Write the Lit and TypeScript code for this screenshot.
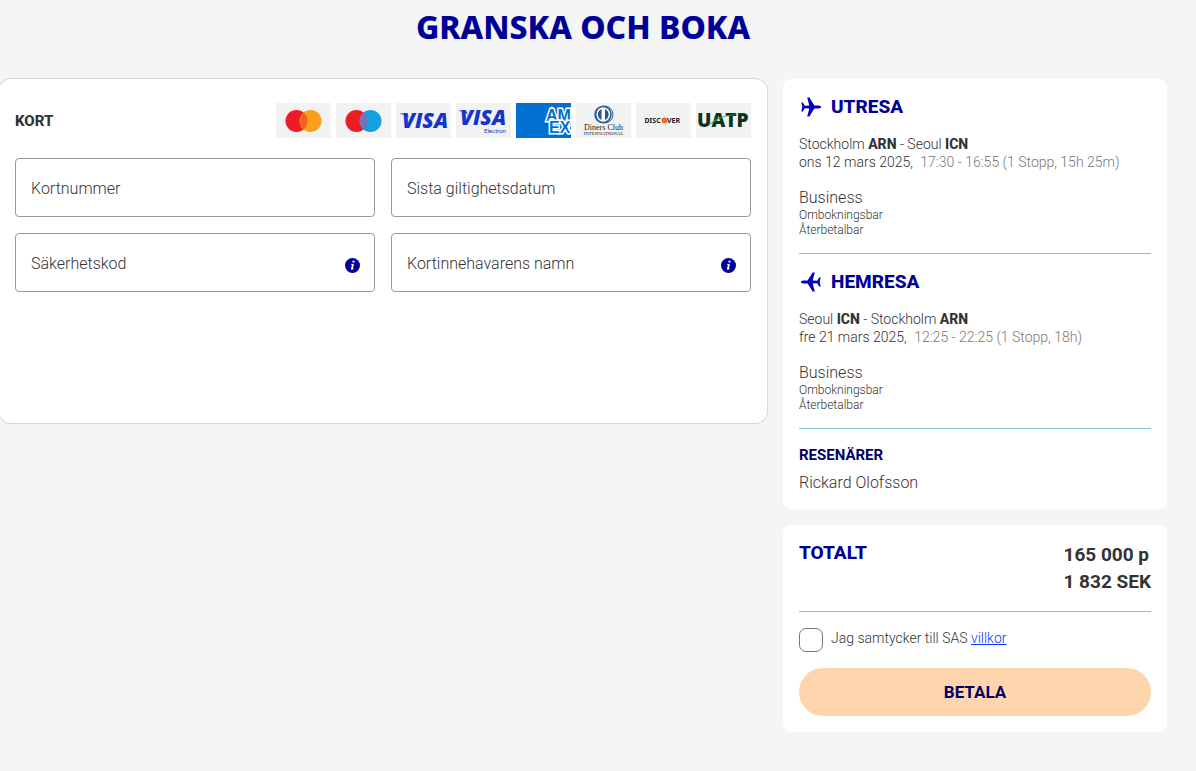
import { LitElement, html, css, svg, nothing } from 'lit';
import { customElement, property } from 'lit/decorators.js';

interface Trip {
  heading: string;
  inbound: boolean;
  from: string;
  fromCode: string;
  to: string;
  toCode: string;
  date: string;
  times: string;
}

const trips: Trip[] = [
  {
    heading: 'UTRESA', inbound: false,
    from: 'Stockholm', fromCode: 'ARN', to: 'Seoul', toCode: 'ICN',
    date: 'ons 12 mars 2025,', times: '17:30 - 16:55 (1 Stopp, 15h 25m)',
  },
  {
    heading: 'HEMRESA', inbound: true,
    from: 'Seoul', fromCode: 'ICN', to: 'Stockholm', toCode: 'ARN',
    date: 'fre 21 mars 2025,', times: '12:25 - 22:25 (1 Stopp, 18h)',
  },
];

const logos = [
  {
    name: 'Mastercard',
    art: svg`
      <circle cx="20.5" cy="18" r="11" fill="#ed1c24"/>
      <circle cx="34.5" cy="18" r="11" fill="#f99f1c"/>
      <path d="M27.5 9.5a11 11 0 0 1 0 17a11 11 0 0 1 0-17z" fill="#f26122"/>`,
  },
  {
    name: 'Maestro',
    art: svg`
      <circle cx="20.5" cy="18" r="11" fill="#ed1c24"/>
      <circle cx="34.5" cy="18" r="11" fill="#14a0dc"/>
      <path d="M27.5 9.5a11 11 0 0 1 0 17a11 11 0 0 1 0-17z" fill="#7673b5"/>`,
  },
  {
    name: 'Visa',
    art: svg`
      <path d="M4 10.500h7l2 4q-3-3-9-3.500z" fill="#1434cb"/>
      <text class="visa" x="6" y="25">VISA</text>`,
  },
  {
    name: 'Visa Electron',
    art: svg`
      <path d="M3 7.500h7l2 4q-3-3-9-3.500z" fill="#1434cb"/>
      <text class="visa" x="4" y="22">VISA</text>
      <text class="electron" x="28" y="30">Electron</text>`,
  },
  {
    name: 'American Express',
    art: svg`
      <rect width="55" height="35" fill="#016fd0"/>
      <text class="amex" x="30" y="18">AM</text>
      <text class="amex" x="33" y="30">EX</text>
      <circle cx="56" cy="25" r="3" fill="none" stroke="#fff" stroke-width="2"/>`,
  },
  {
    name: 'Diners Club International',
    art: svg`
      <circle cx="27" cy="11.500" r="8" fill="#fff" stroke="#24588f" stroke-width="1.500"/>
      <circle cx="28.500" cy="11.500" r="8.500" fill="none" stroke="#24588f"/>
      <path d="M25.500 6a6 6 0 0 0 0 11zM29 6a6 6 0 0 1 0 11z" fill="#24588f"/>
      <text class="diners" x="27.500" y="27">Diners Club</text>
      <text class="intl" x="27.500" y="32">INTERNATIONAL</text>`,
  },
  {
    name: 'Discover',
    art: svg`
      <text class="discover" x="8.500" y="20">DISC</text>
      <circle cx="28.500" cy="17.500" r="3" fill="#f26a21"/>
      <text class="discover" x="31" y="20">VER</text>`,
  },
  {
    name: 'UATP',
    art: svg`
      <text class="uatp" x="1" y="24">UATP</text>
      <path d="M12 23q9-12 38-12.500q-22 1-33 9z" fill="#37b34a"/>`,
  },
];

@customElement('card-field')
class CardField extends LitElement {
  @property() label = '';
  @property() autofill = 'off';
  @property({ type: Boolean }) info = false;

  static styles = css`
    :host { display: block; }
    .field {
      display: grid;
      grid-template-columns: 1fr auto;
      align-items: center;
      box-sizing: border-box;
      height: 59px;
      padding: 0 14px 0 15px;
      border: 1px solid #999;
      border-radius: 4px;
      background: #fff;
    }
    .field:focus-within { border-color: #000099; }
    label, input { grid-area: 1 / 1; }
    label { padding-top: 2px; color: #333; font-weight: 300; font-size: 16px; line-height: 20px; pointer-events: none; }
    input {
      width: 100%;
      height: 57px;
      padding: 0;
      border: 0;
      outline: 0;
      background: transparent;
      font: inherit;
      color: #333;
    }
    input:not(:placeholder-shown) + label { visibility: hidden; }
    .info { display: flex; margin-top: 5px; padding: 0; border: 0; background: none; cursor: pointer; }
  `;

  render() {
    return html`
      <div class="field">
        <input id="value" type="text" placeholder=" " autocomplete=${this.autofill} />
        <label for="value">${this.label}</label>
        ${this.info
          ? html`<button class="info" type="button" aria-label="Information">
              <svg width="15" height="15" viewBox="0 0 15 15" aria-hidden="true">
                <circle cx="7.500" cy="7.500" r="7.500" fill="#000099"/>
                <circle cx="8.500" cy="3.700" r="1.100" fill="#fff"/>
                <path d="M6 6.200L9 5.800L7.900 10.400Q7.900 10.900 9 10.200L8.800 11Q7.600 12 6.500 11.800Q5.700 11.400 6.100 10.200L6.900 6.900L5.900 6.800Z" fill="#fff"/>
              </svg>
            </button>`
          : nothing}
      </div>`;
  }
}

@customElement('trip-summary')
class TripSummary extends LitElement {
  @property({ attribute: false }) trip!: Trip;

  static styles = css`
    :host { display: block; padding-bottom: 15px; border-bottom: 1px solid #7fc3e3; }
    h2 {
      display: flex;
      align-items: center;
      gap: 8px;
      margin: 0 0 16px;
      color: #000099;
      font-size: 19px;
      line-height: 24px;
      font-weight: 800;
    }
    .inbound { transform: scaleX(-1); }
    p { margin: 0; }
    b { font-weight: 800; }
    .leg { font-size: 14px; line-height: 18px; }
    .times { margin-left: 4px; color: #777; }
    .fare { margin-top: 17px; font-size: 16px; line-height: 20px; }
    .rule { font-size: 12px; line-height: 15px; }
  `;

  render() {
    const t = this.trip;
    return html`
      <h2>
        <svg class=${t.inbound ? 'inbound' : ''} width="24" height="24" viewBox="0 0 24 24" aria-hidden="true">
          <path d="M2.300 7.600h1.500l2 3.100l4.500-.1L8.200 2.400h2.200l5 8.100h4.200q2.400.3 2.600 1.500q-.2 1.200-2.600 1.500h-4.200l-5 8.100H8.200l2.100-8.200l-4.500-.1l-2 3.100H2.300l1-4.400z" fill="#0000bf"/>
        </svg>
        ${t.heading}
      </h2>
      <p class="leg">${t.from} <b>${t.fromCode}</b> - ${t.to} <b>${t.toCode}</b></p>
      <p class="leg">${t.date} <span class="times">${t.times}</span></p>
      <p class="fare">Business</p>
      <p class="rule">Ombokningsbar</p>
      <p class="rule">Återbetalbar</p>`;
  }
}

@customElement('app-root')
class AppRoot extends LitElement {
  static styles = css`
    :host {
      display: block;
      box-sizing: border-box;
      min-height: 100vh;
      overflow-x: clip;
      padding: 0 29px 39px 0;
      background: #f5f5f5;
      color: #333;
      font-family: Roboto, "Liberation Sans", sans-serif;
      font-weight: 300;
    }
    main { margin-left: -1px; }
    h1 {
      margin: 0;
      padding: 7px 0 32px;
      color: #000099;
      font: 800 32px/40px "Noto Sans", "Open Sans", sans-serif;
      text-align: center;
    }
    h2, h3, p { margin: 0; }
    .columns { display: grid; grid-template-columns: 2fr 1fr; gap: 16px; align-items: start; }
    .payment {
      min-height: 304px;
      padding: 24px 16px 16px;
      border-radius: 12px;
      background: #fff;
      box-shadow: 0 0 0 1px #d8d8d8;
    }
    .payment-head { display: flex; align-items: center; justify-content: space-between; margin-bottom: 20px; }
    .payment-head h2 { font-size: 15px; line-height: 20px; font-weight: 800; }
    .logos { display: flex; gap: 5px; margin: 0; padding: 0; list-style: none; }
    .logos svg { display: block; background: #f2f2f2; }
    .fields { display: grid; grid-template-columns: 1fr 1fr; gap: 16px; }
    .visa { font: italic 800 21px "Open Sans", sans-serif; fill: #1434cb; }
    .electron { font: 400 6px Roboto, sans-serif; fill: #1434cb; }
    .amex { font: 700 16px "Liberation Sans", sans-serif; fill: #016fd0; stroke: #fff; stroke-width: 3px; paint-order: stroke; }
    .diners { font: 400 8px "Liberation Serif", serif; fill: #222; text-anchor: middle; }
    .intl { font: 400 5px "Liberation Serif", serif; fill: #222; text-anchor: middle; }
    .discover { font: 700 7px "Noto Sans", sans-serif; fill: #222; }
    .uatp { font: 800 19px "Open Sans", sans-serif; fill: #0b341f; }
    .side { display: grid; gap: 16px; }
    .card { padding: 16px; border-radius: 8px; background: #fff; }
    .trips { display: grid; gap: 16px; }
    .travellers h3 { margin-bottom: 8px; color: #000066; font-size: 15px; line-height: 20px; font-weight: 700; }
    .travellers p { font-size: 16px; line-height: 20px; }
    .total {
      display: flex;
      justify-content: space-between;
      padding-bottom: 16px;
      border-bottom: 1px solid #7fc3e3;
      font-size: 19px;
      font-weight: 700;
    }
    .total h2 { color: #000099; font-size: 19px; line-height: 24px; font-weight: 800; }
    .total p { line-height: 27px; }
    .consent { display: flex; gap: 8px; margin: 16px 0; font-size: 14px; line-height: 20px; }
    .consent input {
      appearance: none;
      flex: none;
      width: 24px;
      height: 24px;
      margin: 0;
      border: 1px solid #777;
      border-radius: 7px;
      background: #fff;
    }
    .consent input:checked { background: #000099; }
    .consent a { color: #0a32ff; }
    .pay {
      display: block;
      width: 100%;
      height: 48px;
      border: 0;
      border-radius: 24px;
      background: #ffd5ae;
      color: #000066;
      font: 700 17px/20px Roboto, sans-serif;
      cursor: pointer;
    }
    @media (max-width: 800px) {
      .columns { grid-template-columns: 1fr; }
      .payment-head { flex-wrap: wrap; gap: 12px; }
      .logos { flex-wrap: wrap; }
    }
  `;

  render() {
    return html`
      <main>
        <h1>GRANSKA OCH BOKA</h1>
        <div class="columns">
          <section class="payment">
            <div class="payment-head">
              <h2>KORT</h2>
              <ul class="logos">
                ${logos.map((l) => html`<li><svg width="55" height="35" viewBox="0 0 55 35" role="img" aria-label=${l.name}>${l.art}</svg></li>`)}
              </ul>
            </div>
            <form class="fields">
              <card-field label="Kortnummer" autofill="cc-number"></card-field>
              <card-field label="Sista giltighetsdatum" autofill="cc-exp"></card-field>
              <card-field label="Säkerhetskod" autofill="cc-csc" info></card-field>
              <card-field label="Kortinnehavarens namn" autofill="cc-name" info></card-field>
            </form>
          </section>
          <aside class="side">
            <section class="card trips">
              ${trips.map((t) => html`<trip-summary .trip=${t}></trip-summary>`)}
              <div class="travellers">
                <h3>RESENÄRER</h3>
                <p>Rickard Olofsson</p>
              </div>
            </section>
            <section class="card">
              <div class="total">
                <h2>TOTALT</h2>
                <div class="sums">
                  <p>165 000 p</p>
                  <p>1 832 SEK</p>
                </div>
              </div>
              <div class="consent">
                <input id="terms" type="checkbox" />
                <label for="terms">Jag samtycker till SAS <a href="#villkor">villkor</a></label>
              </div>
              <button class="pay" type="button">BETALA</button>
            </section>
          </aside>
        </div>
      </main>`;
  }
}
